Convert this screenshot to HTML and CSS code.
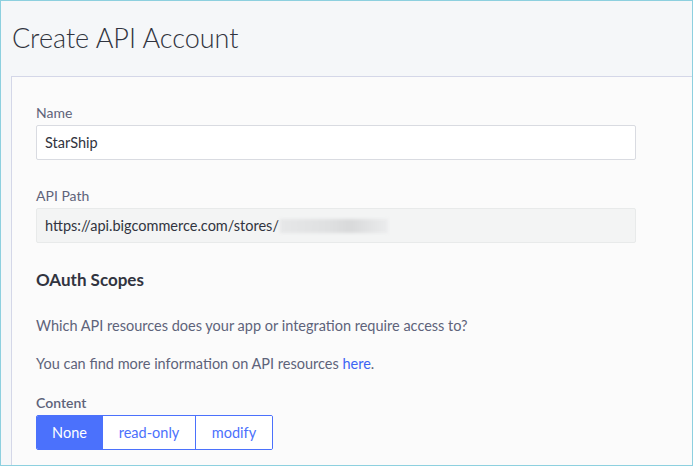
FILE: index.html
```html
<!DOCTYPE html>
<html>
<head>
<meta charset="utf-8">
<link rel="stylesheet" href="styles.css">
</head>
<body>
<div class="frame">
  <header class="page-header">
    <h1 class="page-title">Create API Account</h1>
  </header>
  <section class="panel">
    <div class="field">
      <label class="field-label">Name</label>
      <div class="input">StarShip</div>
    </div>
    <div class="field">
      <label class="field-label">API Path</label>
      <div class="input input-readonly">https://api.bigcommerce.com/stores/<span class="blur"></span></div>
    </div>
    <h2 class="section-title">OAuth Scopes</h2>
    <p class="text">Which API resources does your app or integration require access to?</p>
    <p class="text">You can find more information on API resources <a class="link" href="#">here</a>.</p>
    <div class="scope">
      <div class="scope-label">Content</div>
      <div class="btn-group">
        <span class="btn btn-active btn-none">None</span>
        <span class="btn btn-read">read-only</span>
        <span class="btn btn-modify">modify</span>
      </div>
    </div>
  </section>
</div>
</body>
</html>
```
FILE: styles.css
```css
html, body { margin: 0; padding: 0; }
body { font-family: Lato, "Open Sans", sans-serif; }
.frame {
  width: 693px; height: 466px; box-sizing: border-box;
  border: 1px solid #8dd0df; background: #f5f7f9; overflow: hidden;
}
.page-header { height: 75px; display: flex; align-items: flex-start; }
.page-title {
  margin: 20px 0 0 11px; font-weight: 300; font-size: 27px; line-height: 34px;
  color: #313440;
}
.panel {
  margin-left: 10px; border-top: 1px solid #d4d7e8; border-left: 1px solid #d4d7e8;
  background: #fbfbfb; padding: 26px 0 40px 24px; height: 500px;
}
.field { margin-bottom: 26px; width: 600px; }
.field-label { display: block; font-size: 14px; line-height: 20px; color: #5e637a; margin-bottom: 2px; }
.field + .field { margin-bottom: 25px; }
.input {
  box-sizing: border-box; height: 35px; border: 1px solid #d9dbe1; border-radius: 2px;
  background: #fff; padding: 0 8px; font-size: 14.5px; color: #313440;
  display: flex; align-items: center;
}
.input-readonly { background: #f3f4f4; border-color: #e8eaea; }
.blur { display: inline-block; width: 108px; height: 14px; margin-left: 1px;
  background: linear-gradient(90deg, #e6e7e8 0%, #dfe0e1 45%, #d8d9da 65%, #ebeced 100%); filter: blur(1.5px); }
.section-title { margin: 12px 0 0; font-size: 17px; font-weight: 700; color: #313440; line-height: 24px; }
.text { margin: 24px 0 0; font-size: 14.5px; line-height: 20px; color: #5e637a; }
.text + .text { margin-top: 18px; }
.link { color: #3c64f4; text-decoration: none; }
.scope { margin-top: 20px; }
.scope-label { font-size: 14px; font-weight: 600; color: #5e637a; line-height: 18px; }
.btn-group { display: inline-flex; margin-top: 3px; border: 1px solid #4b71fc; border-radius: 2px; overflow: hidden; }
.btn {
  height: 33px; line-height: 33px; font-size: 14.5px; color: #4b71fc; background: #fff;
  text-align: center; border-left: 1px solid #4b71fc; box-sizing: border-box;
}
.btn:first-child { border-left: none; }
.btn-none { width: 65px; }
.btn-read { width: 93px; }
.btn-modify { width: 77px; }
.btn-active { background: #4b71fc; color: #fff; }
```
